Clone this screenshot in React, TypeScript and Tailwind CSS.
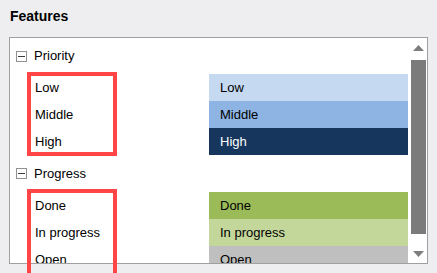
import React from "react";

const MinusBox = () => (
  <svg width="11" height="11" viewBox="0 0 11 11" className="shrink-0">
    <rect x="0.5" y="0.5" width="10" height="10" fill="#fff" stroke="#919191" />
    <line x1="2" y1="5.5" x2="9" y2="5.5" stroke="#3c3c3c" strokeWidth="1" />
  </svg>
);

type Item = { label: string; bg: string; fg: string };

const Header = ({ title, h }: { title: string; h: string }) => (
  <div className={`flex items-center ${h} pl-[6px]`}>
    <MinusBox />
    <span className="ml-[7px] leading-[20px]">{title}</span>
  </div>
);

const Row = ({ item }: { item: Item }) => (
  <div className="flex h-[27px] items-center">
    <div className="w-[199px] pl-[25px] leading-[27px]">{item.label}</div>
    <div
      className={`w-[199px] h-[27px] pl-[11px] leading-[27px] ${item.bg} ${item.fg}`}
    >
      {item.label}
    </div>
  </div>
);

const priority: Item[] = [
  { label: "Low", bg: "bg-[#c5d9f1]", fg: "text-[#000000]" },
  { label: "Middle", bg: "bg-[#8db4e2]", fg: "text-[#000000]" },
  { label: "High", bg: "bg-[#17365d]", fg: "text-[#ffffff]" },
];
const progress: Item[] = [
  { label: "Done", bg: "bg-[#9bbb59]", fg: "text-[#000000]" },
  { label: "In progress", bg: "bg-[#c4d79b]", fg: "text-[#000000]" },
  { label: "Open", bg: "bg-[#bfbfbf]", fg: "text-[#000000]" },
];

export default function App() {
  return (
    <div
      className="relative w-[437px] h-[273px] overflow-hidden bg-[#eeeef1] text-[13px] text-[#000000]"
      style={{ fontFamily: '"Liberation Sans", Arial, sans-serif' }}
    >
      <div className="pl-[10px] pt-[6px] h-[37px] text-[14px] font-bold leading-[20px]">
        Features
      </div>
      <div className="ml-[9px] w-[419px] h-[227px] border border-[#a0a0a0] bg-white flex overflow-hidden">
        <div className="w-[399px] flex flex-col">
          <Header title="Priority" h="h-[36px] shrink-0" />
          {priority.map((it) => (
            <Row key={it.label} item={it} />
          ))}
          <Header title="Progress" h="h-[37px] shrink-0" />
          {progress.map((it) => (
            <Row key={it.label} item={it} />
          ))}
        </div>
        <div className="ml-px w-[17px] flex flex-col items-center">
          <div className="h-[22px] w-full flex items-start justify-center pt-[7px]">
            <svg width="11" height="6" viewBox="0 0 11 6">
              <polygon points="0,6 5.5,0 11,6" fill="#7e7e7e" />
            </svg>
          </div>
          <div className="w-[15px] h-[174px] bg-[#7b7b7b]" />
          <div className="flex-1 w-full flex items-start justify-center pt-[17px]">
            <svg width="11" height="6" viewBox="0 0 11 6">
              <polygon points="0,0 11,0 5.5,6" fill="#7e7e7e" />
            </svg>
          </div>
        </div>
      </div>
      <div className="absolute left-[27px] top-[72px] w-[90px] h-[84px] border-4 border-[#ff4545]" />
      <div className="absolute left-[27px] top-[189px] w-[90px] h-[90px] border-4 border-[#ff4545]" />
    </div>
  );
}
